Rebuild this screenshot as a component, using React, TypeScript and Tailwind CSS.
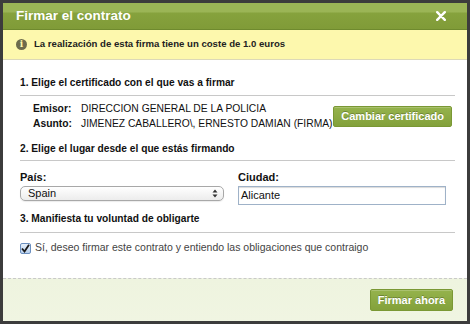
import React from "react";

const btn =
  "rounded-[2px] bg-[linear-gradient(#95b34c,#83a13b)] border border-[#7a9834] flex items-center text-white font-bold text-[11px] whitespace-nowrap shadow-[inset_0_1px_0_rgba(255,255,255,0.2)]";

export default function App() {
  return (
    <div
      className="w-[470px] h-[324px] bg-[#3c3c3c] p-[3px] font-['Liberation_Sans',Arial,sans-serif]"
      style={{ fontFamily: '"Liberation Sans", Arial, sans-serif' }}
    >
      <div className="w-full h-full bg-white flex flex-col overflow-hidden">
        {/* Header */}
        <div className="h-[27px] shrink-0 flex items-center justify-between pl-[13px] pr-[21px] bg-[linear-gradient(#9bb556_0px,#9bb556_9px,#86a23d_10px,#809b38_100%)] border-b border-[#6f8a2e]">
          <span className="text-white font-bold text-[13.5px] leading-none">Firmar el contrato</span>
          <svg width="10" height="10" viewBox="0 0 10 10">
            <path d="M1.2 1.2 L8.8 8.8 M8.8 1.2 L1.2 8.8" stroke="white" strokeWidth="2.4" strokeLinecap="round" />
          </svg>
        </div>
        {/* Notice */}
        <div className="h-[30px] shrink-0 bg-[#fdf8ad] border-b border-[#dcd9b8] flex items-center pl-[13px] gap-[7px]">
          <div className="w-[11px] h-[11px] rounded-full bg-[#6d6b4c] flex items-center justify-center">
            <span className="text-[#fdf8ad] font-bold text-[9px] leading-none" style={{ fontFamily: '"DejaVu Serif", serif' }}>i</span>
          </div>
          <span className="text-[9.6px] font-bold text-[#222]">La realización de esta firma tiene un coste de 1.0 euros</span>
        </div>
        {/* Body */}
        <div className="flex-1 pl-[17px] pr-[12px] pt-[16px] text-[#111]">
          <div className="text-[10.2px] font-bold leading-[14px]">1. Elige el certificado con el que vas a firmar</div>
          <div className="h-px bg-[#c8c8c8] mt-[5px]" />
          <div className="flex items-center justify-between mt-[5px] pl-[13px] pr-[3px]">
            <div className="text-[10.3px] leading-[15px] whitespace-nowrap">
              <div className="flex"><span className="font-bold w-[48px]">Emisor:</span><span>DIRECCION GENERAL DE LA POLICIA</span></div>
              <div className="flex"><span className="font-bold w-[48px]">Asunto:</span><span>JIMENEZ CABALLERO\, ERNESTO DAMIAN (FIRMA)</span></div>
            </div>
            <div className={`h-[21px] px-[7px] ${btn}`} style={{ textShadow: "0 -1px 0 rgba(0,0,0,0.25)" }}>Cambiar certificado</div>
          </div>
          <div className="text-[10.2px] font-bold leading-[14px] mt-[11px]">2. Elige el lugar desde el que estás firmando</div>
          <div className="h-px bg-[#c8c8c8] mt-[4px]" />
          <div className="flex mt-[10px]">
            <div className="w-[204px]">
              <div className="text-[11px] font-bold leading-[12px]">País:</div>
              <div className="mt-[3px] h-[15px] rounded-[5px] border border-[#a8a8a8] bg-[linear-gradient(#ffffff,#ececec)] flex items-center justify-between pl-[7px] pr-[5px] shadow-[0_1px_1px_rgba(0,0,0,0.08)]">
                <span className="text-[11px] leading-none">Spain</span>
                <svg width="6" height="9" viewBox="0 0 6 9"><path d="M3 0.5 L5.5 3.5 L0.5 3.5 Z M3 8.5 L5.5 5.5 L0.5 5.5 Z" fill="#333" /></svg>
              </div>
            </div>
            <div className="ml-[14px] w-[208px]">
              <div className="text-[11px] font-bold leading-[12px]">Ciudad:</div>
              <div className="mt-[3px] h-[19px] border border-[#9fb2c8] shadow-[inset_0_1px_1px_rgba(0,0,0,0.15)] flex items-center pl-[2px] text-[11px]">Alicante</div>
            </div>
          </div>
          <div className="text-[10.2px] font-bold leading-[14px] mt-[7px]">3. Manifiesta tu voluntad de obligarte</div>
          <div className="h-px bg-[#c8c8c8] mt-[6px]" />
          <div className="flex items-center mt-[9px] gap-[4px] h-[12px]">
            <div className="w-[11px] h-[11px] rounded-[2px] border border-[#6b8fbf] bg-[linear-gradient(#e6f0fb,#b9d1ee)] flex items-center justify-center">
              <svg width="9" height="9" viewBox="0 0 9 9"><path d="M1 4.5 L3.5 7.5 L8 0.8" stroke="#1a1a1a" strokeWidth="1.8" fill="none" /></svg>
            </div>
            <span className="text-[10.5px] text-[#444] whitespace-nowrap">Sí, deseo firmar este contrato y entiendo las obligaciones que contraigo</span>
          </div>
        </div>
        {/* Footer */}
        <div className="h-[43px] shrink-0 border-t border-dashed border-[#c9c9c9] bg-[linear-gradient(#eef4df,#f0f5e2)] flex items-center justify-end pr-[14px]">
          <div className={`h-[22px] px-[7px] ${btn}`} style={{ textShadow: "0 -1px 0 rgba(0,0,0,0.25)" }}>Firmar ahora</div>
        </div>
      </div>
    </div>
  );
}
